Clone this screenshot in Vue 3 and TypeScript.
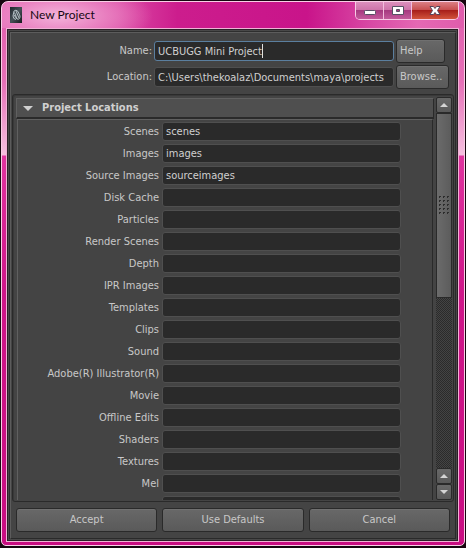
<script setup lang="ts">
import { ref } from 'vue'

interface Location {
  label: string
  value: string
}

const projectName = ref('UCBUGG Mini Project')
const projectPath = ref('C:\\Users\\thekoalaz\\Documents\\maya\\projects')
const expanded = ref(true)

const locations = ref<Location[]>([
  { label: 'Scenes', value: 'scenes' },
  { label: 'Images', value: 'images' },
  { label: 'Source Images', value: 'sourceimages' },
  { label: 'Disk Cache', value: '' },
  { label: 'Particles', value: '' },
  { label: 'Render Scenes', value: '' },
  { label: 'Depth', value: '' },
  { label: 'IPR Images', value: '' },
  { label: 'Templates', value: '' },
  { label: 'Clips', value: '' },
  { label: 'Sound', value: '' },
  { label: 'Adobe(R) Illustrator(R)', value: '' },
  { label: 'Movie', value: '' },
  { label: 'Offline Edits', value: '' },
  { label: 'Shaders', value: '' },
  { label: 'Textures', value: '' },
  { label: 'Mel', value: '' },
  { label: '', value: '' },
])

const gripRows = [0, 1, 2, 3, 4]
const gripColumns = [0, 1, 2]
</script>

<template>
  <div class="screen">
    <div class="window">
      <header class="titlebar">
        <svg class="app-icon" viewBox="0 0 12 16" aria-hidden="true">
          <defs>
            <linearGradient id="iconFill" x1="0" y1="0" x2="1" y2="1">
              <stop offset="0" stop-color="#20262b" />
              <stop offset="0.5" stop-color="#465057" />
              <stop offset="1" stop-color="#15191c" />
            </linearGradient>
          </defs>
          <rect width="12" height="16" fill="url(#iconFill)" />
          <path d="M3 9L4 4Q6 2 8 4.500L10 9Q10 13 7 12L4.500 5.500M6 4L9 11M3 9Q3 12 6 12.500M4 8L7 12" fill="none" stroke="#b4bfc4" stroke-width="1" />
        </svg>
        <h1 class="title">New Project</h1>
        <div class="caption">
          <button type="button" class="cap" aria-label="Minimize">
            <svg width="14" height="12" viewBox="0 0 14 12"><rect x="1.5" y="5.5" width="11" height="4" rx="1" fill="#fff" stroke="#565064" /></svg>
          </button>
          <button type="button" class="cap" aria-label="Maximize">
            <svg width="14" height="12" viewBox="0 0 14 12"><path d="M1.500 1.500H12.500V9.500H1.500Z M5.500 4.500V6.500H8.500V4.500Z" fill="#fff" fill-rule="evenodd" stroke="#565064" /></svg>
          </button>
          <button type="button" class="cap close" aria-label="Close">
            <svg width="14" height="12" viewBox="0 0 14 12"><path d="M2 1.500H5.500L7 3.500L8.500 1.500H12L9.500 5.500L12 9.500H8.500L7 7.500L5.500 9.500H2L4.500 5.500Z" fill="#fff" stroke="#584458" stroke-linejoin="round" /></svg>
          </button>
        </div>
      </header>

      <main class="client">
        <form class="dialog" @submit.prevent>
          <div class="top">
            <div class="top-row">
              <label for="project-name">Name:</label>
              <span class="field focus">
                <input id="project-name" v-model="projectName" :size="1" type="text" />
                <span class="caret-line" aria-hidden="true"><span class="measure">{{ projectName }}</span></span>
              </span>
              <span class="side"><button type="button" class="btn help">Help</button></span>
            </div>
            <div class="top-row">
              <label for="project-path">Location:</label>
              <span class="field"><input id="project-path" v-model="projectPath" :size="1" type="text" /></span>
              <span class="side"><button type="button" class="btn browse">Browse..</button></span>
            </div>
          </div>

          <div class="scroll">
            <div class="viewport">
              <button type="button" class="section" :aria-expanded="expanded" @click="expanded = !expanded">
                <svg width="10" height="5" viewBox="0 0 10 5" aria-hidden="true"><path d="M0 0H10L5 5Z" fill="#d0d0d0" /></svg>
                <span>Project Locations</span>
              </button>
              <div v-if="expanded" class="rows">
                <div v-for="(item, i) in locations" :key="i" class="row">
                  <label :for="`loc-${i}`">{{ item.label }}</label>
                  <span class="field"><input :id="`loc-${i}`" v-model="item.value" :size="1" type="text" /></span>
                </div>
              </div>
            </div>
            <div class="scrollbar">
              <button type="button" class="arrow" aria-label="Scroll up"><svg width="8" height="4" viewBox="0 0 8 4"><path d="M0 4L4 0L8 4Z" fill="#d4d4d4" /></svg></button>
              <div class="track">
                <div class="thumb">
                  <svg width="10" height="18" viewBox="0 0 10 18" aria-hidden="true">
                    <template v-for="r in gripRows" :key="r">
                      <path v-for="c in gripColumns" :key="c" :d="`M${c * 4} ${r * 4}h2v1h-1v1h-1z`" fill="#2c2c2c" />
                    </template>
                  </svg>
                </div>
              </div>
              <button type="button" class="arrow" aria-label="Page up"><svg width="8" height="4" viewBox="0 0 8 4"><path d="M0 4L4 0L8 4Z" fill="#d4d4d4" /></svg></button>
              <button type="button" class="arrow" aria-label="Scroll down"><svg width="8" height="4" viewBox="0 0 8 4"><path d="M0 0L4 4L8 0Z" fill="#d4d4d4" /></svg></button>
            </div>
          </div>

          <footer class="actions">
            <button type="submit" class="btn">Accept</button>
            <button type="button" class="btn">Use Defaults</button>
            <button type="button" class="btn">Cancel</button>
          </footer>
        </form>
      </main>
    </div>
  </div>
</template>

<style>
body {
  background: #17060f;
}
</style>

<style scoped>
.screen {
  box-sizing: border-box;
  height: 100vh;
  display: flex;
  padding: 1px 1px 2px;
}
.window {
  flex: 1;
  min-width: 0;
  display: flex;
  flex-direction: column;
  padding: 0 5px 3px 4px;
  border: 1px solid #f8cfe6;
  border-radius: 7px 7px 5px 5px;
  background:
    radial-gradient(ellipse 95px 34px at 56px 14px, #f3b3da 0%, #eb8ac5d0 50%, #d02a9500 100%) no-repeat 0 0 / 100% 26px,
    linear-gradient(90deg, #e667b5 0%, #dc4ba6 25%, #cc1d8d 38%, #c9148a 66%, #d94aa5 80%, #e568b3 90%, #e05cac 100%) no-repeat 0 0 / 100% 26px,
    linear-gradient(180deg, #e05cac 0, #e670b7 80px, #f5bfdf 153px, #e0339f 154px, #cf1689 290px, #c90d82 100%);
  color: #c8c8c8;
  font: 11px/14px "DejaVu Sans Condensed", "Noto Sans", sans-serif;
}
.titlebar {
  flex: none;
  display: flex;
  align-items: flex-start;
  height: 26px;
  padding-left: 4px;
}
.app-icon {
  width: 12px;
  height: 16px;
  margin-top: 5px;
}
.title {
  flex: 1;
  margin: 4px 0 0 8px;
  color: #160711;
  font: 12px/17px Lato, "Noto Sans", sans-serif;
}
.caption {
  display: flex;
  border: 1px solid #f7cce5;
  border-top: 0;
  border-radius: 0 0 5px 5px;
  overflow: hidden;
}
.cap {
  display: flex;
  justify-content: center;
  align-items: center;
  width: 28px;
  height: 17px;
  padding: 0;
  border: 0;
  border-right: 1px solid #f3bddd;
  background: linear-gradient(#dc8fbd 0%, #ce75aa 45%, #a63a80 50%, #c25a9b 100%);
}
.cap.close {
  width: 46px;
  border-right: 0;
  background: linear-gradient(#dc7f84 0%, #c95050 45%, #a81f1b 50%, #d2543c 100%);
}
.client {
  flex: 1;
  min-height: 0;
  display: flex;
  padding: 3px 2px 2px 3px;
  border: 1px solid #f0b2d6;
  background: #2e2e2e;
  box-shadow: inset 0 0 0 1px #2b2027, inset 0 0 0 2px #484848;
}
.dialog {
  flex: 1;
  min-width: 0;
  display: flex;
  flex-direction: column;
  padding: 6px 1px 6px 1px;
  border: 1px solid #5c5c5c;
  border-right-color: #2a2a2a;
  border-bottom-color: #2a2a2a;
  background: #444;
}
.top {
  display: flex;
  flex-direction: column;
  gap: 2px;
  padding-bottom: 5px;
}
.top-row {
  display: grid;
  grid-template-columns: 140px 1fr 58px;
  align-items: center;
  column-gap: 2px;
}
.top-row label,
.row label {
  text-align: right;
  white-space: nowrap;
}
.field {
  display: flex;
  position: relative;
  min-width: 0;
  border: 1px solid #4f4f4f;
  border-radius: 3px;
  background: #2a2a2a;
}
.field.focus {
  border-color: #5b7f9f;
}
.field input {
  flex: 1;
  min-width: 0;
  height: 17px;
  padding: 0 3px;
  border: 0;
  outline: 0;
  background: transparent;
  color: #d0d0d0;
  font: inherit;
}
.top .field input {
  height: 18px;
}
.caret-line {
  position: absolute;
  top: 2px;
  bottom: 2px;
  left: 3px;
  border-right: 1px solid #e0e0e0;
  pointer-events: none;
}
.measure {
  visibility: hidden;
  white-space: pre;
}
.btn {
  height: 24px;
  padding: 0 3px;
  border: 1px solid #2a2a2a;
  border-radius: 3px;
  background: linear-gradient(#686868, #5a5a5a);
  box-shadow: inset 0 1px #707070;
  color: #c8c8c8;
  font: inherit;
}
.side {
  display: flex;
}
.help {
  width: 49px;
  text-align: left;
}
.browse {
  width: 53px;
  text-align: left;
}
.scroll {
  flex: 1;
  min-height: 0;
  display: flex;
  gap: 2px;
  padding: 2px 1px 1px 3px;
  border: 1px solid #2a2a2a;
  border-radius: 3px;
  box-shadow: inset 1px 1px #393939;
}
.viewport {
  flex: 1;
  min-width: 0;
  margin-top: 1px;
  overflow: hidden;
}
.section {
  display: flex;
  align-items: center;
  gap: 9px;
  width: 100%;
  height: 21px;
  padding: 0 6px;
  border: 1px solid #606060;
  border-right-color: #2a2a2a;
  border-bottom: 2px solid #2a2a2a;
  background: #4f4f4f;
  color: #d0d0d0;
  font: bold 11px/14px "DejaVu Sans Condensed", "Noto Sans", sans-serif;
}
.rows {
  display: flex;
  flex-direction: column;
  gap: 3px;
  margin: 0 1px;
  padding: 2px 31px 0 0;
  border: 1px solid #606060;
  border-right-color: #2a2a2a;
}
.row {
  display: grid;
  grid-template-columns: 141px 1fr;
  column-gap: 3px;
  align-items: center;
}
.scrollbar {
  flex: none;
  display: flex;
  flex-direction: column;
  width: 16px;
}
.arrow {
  display: flex;
  justify-content: center;
  align-items: center;
  height: 16px;
  padding: 0;
  border: 1px solid #2a2a2a;
  border-radius: 2px;
  background: linear-gradient(#686868, #595959);
}
.track {
  flex: 1;
  background: repeating-conic-gradient(#2b2b2b 0 25%, #444 0 50%) 0 0 / 2px 2px;
}
.thumb {
  box-sizing: border-box;
  display: flex;
  justify-content: center;
  align-items: center;
  height: 52%;
  border: 1px solid #2a2a2a;
  background: linear-gradient(90deg, #6b6b6b, #5c5c5c);
}
.actions {
  flex: none;
  display: grid;
  grid-template-columns: 1fr 1fr 1fr;
  gap: 5px;
  padding: 6px 4px 0;
}
</style>
